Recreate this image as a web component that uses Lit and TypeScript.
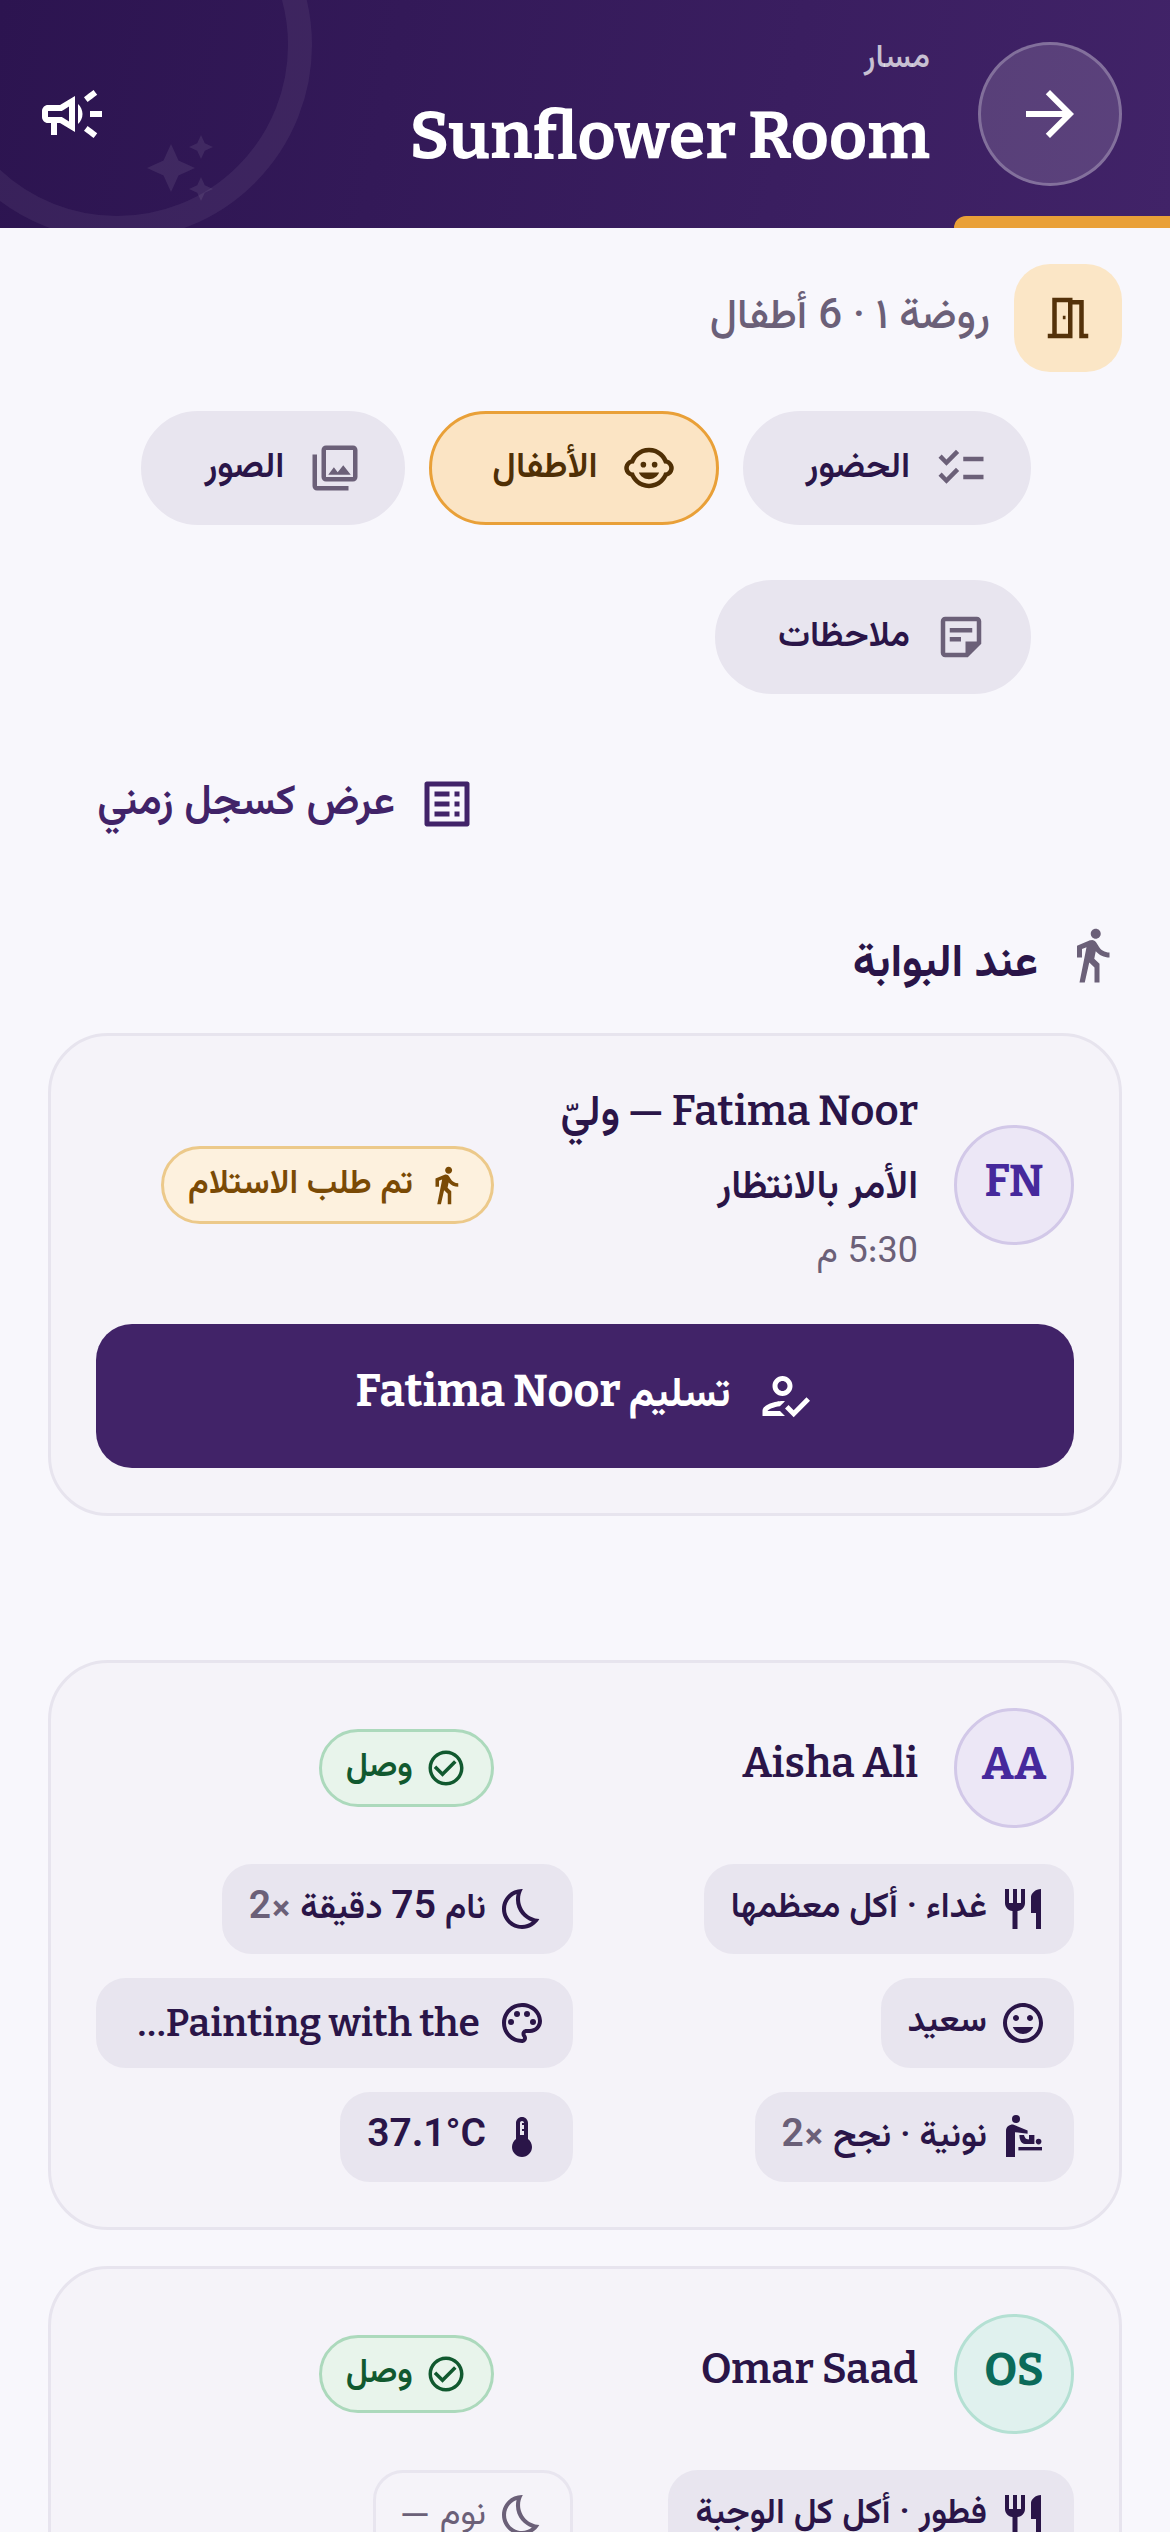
import { LitElement, html, css, svg } from 'lit'
import { customElement } from 'lit/decorators.js'

const ICONS: Record<string, unknown> = {
  arrow: svg`<path d="M12 4l-1.41 1.41L16.17 11H4v2h12.17l-5.58 5.59L12 20l8-8z"/>`,
  campaign: svg`<path d="M18 11v2h4v-2h-4zm-2 6.61c.96.71 2.21 1.65 3.2 2.39.4-.53.8-1.07 1.2-1.6-.99-.74-2.24-1.68-3.2-2.4-.4.54-.8 1.08-1.2 1.61zM20.4 5.6c-.4-.53-.8-1.07-1.2-1.6-.99.74-2.24 1.68-3.2 2.4.4.53.8 1.07 1.2 1.6.96-.72 2.21-1.65 3.2-2.4zM4 9c-1.1 0-2 .9-2 2v2c0 1.1.9 2 2 2h1v4h2v-4h1l5 3V6L8 9H4zm5.03 1.71L11 9.53v4.94l-1.97-1.18-.48-.29H4v-2h4.55l.48-.29zM15.5 12c0-1.33-.58-2.53-1.5-3.35v6.69c.92-.81 1.5-2.01 1.5-3.34z"/>`,
  sparkle: svg`<path d="M19 9l1.25-2.75L23 5l-2.75-1.25L19 1l-1.25 2.75L15 5l2.75 1.25L19 9zm-7.5.5L9 4 6.5 9.5 1 12l5.5 2.5L9 20l2.5-5.5L17 12l-5.5-2.5zM19 15l-1.25 2.75L15 19l2.75 1.25L19 23l1.25-2.75L23 19l-2.75-1.25L19 15z"/>`,
  door: svg`<path fill-rule="evenodd" d="M14 6v15H3v-2h2V3h9v1h5v15h2v2h-4V6h-3zM7 5v14h5V5H7zm2.7 6v1.6h1.2V11H9.7z"/>`,
  checklist: svg`<path d="M22 7h-9v2h9V7zm0 8h-9v2h9v-2zM5.54 11L2 7.46l1.41-1.41 2.12 2.12 4.24-4.24 1.41 1.41L5.54 11zm0 8L2 15.46l1.41-1.41 2.12 2.12 4.24-4.24 1.41 1.41L5.54 19z"/>`,
  child: svg`<circle cx="14.5" cy="10.5" r="1.25"/><circle cx="9.5" cy="10.5" r="1.25"/><path d="M22.94 11.34c-.25-1.51-1.36-2.74-2.81-3.17-.53-1.12-1.28-2.1-2.19-2.91C16.36 3.85 14.28 3 12 3s-4.36.85-5.94 2.26c-.92.81-1.67 1.8-2.19 2.91-1.45.43-2.56 1.65-2.81 3.17-.04.21-.06.43-.06.66 0 .23.02.45.06.66.25 1.51 1.36 2.74 2.81 3.17.52 1.11 1.27 2.09 2.17 2.89C7.62 20.14 9.71 21 12 21s4.38-.86 5.97-2.28c.9-.8 1.65-1.79 2.17-2.89 1.44-.43 2.55-1.65 2.8-3.17.04-.21.06-.43.06-.66 0-.23-.02-.45-.06-.66zM19 14c-.1 0-.19-.02-.29-.03-.2.67-.49 1.29-.86 1.86C16.6 17.74 14.45 19 12 19s-4.6-1.26-5.85-3.17c-.37-.57-.66-1.19-.86-1.86-.1.01-.19.03-.29.03-1.1 0-2-.9-2-2s.9-2 2-2c.1 0 .19.02.29.03.2-.67.49-1.29.86-1.86C7.4 6.26 9.55 5 12 5s4.6 1.26 5.85 3.17c.37.57.66 1.19.86 1.86.1-.01.19-.03.29-.03 1.1 0 2 .9 2 2s-.9 2-2 2zM7.5 14c.76 1.77 2.49 3 4.5 3s3.74-1.23 4.5-3h-9z"/>`,
  photos: svg`<path d="M20 4v12H8V4h12m0-2H8c-1.1 0-2 .9-2 2v12c0 1.1.9 2 2 2h12c1.1 0 2-.9 2-2V4c0-1.1-.9-2-2-2zm-8.5 9.67l1.69 2.26 2.48-3.1L19 15H9zM2 6v14c0 1.1.9 2 2 2h14v-2H4V6H2z"/>`,
  note: svg`<path d="M19 5v9h-5v5H5V5h14m0-2H5c-1.1 0-2 .9-2 2v14c0 1.1.9 2 2 2h10l6-6V5c0-1.1-.9-2-2-2zm-7 11H7v-2h5v2zm5-4H7V8h10v2z"/>`,
  list: svg`<path d="M19 5v14H5V5h14m1.1-2H3.9c-.5 0-.9.4-.9.9v16.2c0 .4.4.9.9.9h16.2c.4 0 .9-.5.9-.9V3.9c0-.5-.5-.9-.9-.9zM11 7h6v2h-6V7zm0 4h6v2h-6v-2zm0 4h6v2h-6zM7 7h2v2H7zm0 4h2v2H7zm0 4h2v2H7z"/>`,
  walk: svg`<path d="M13.5 5.5c1.1 0 2-.9 2-2s-.9-2-2-2-2 .9-2 2 .9 2 2 2zM9.8 8.9L7 23h2.1l1.8-8 2.1 2v6h2v-7.5l-2.1-2 .6-3C14.8 12 16.8 13 19 13v-2c-1.9 0-3.5-1-4.3-2.4l-1-1.6c-.4-.6-1-1-1.7-1-.3 0-.5.1-.8.1L6 8.3V13h2V9.6l1.8-.7"/>`,
  handover: svg`<path d="M11 12c2.21 0 4-1.79 4-4s-1.79-4-4-4-4 1.79-4 4 1.79 4 4 4zm0-6c1.1 0 2 .9 2 2s-.9 2-2 2-2-.9-2-2 .9-2 2-2zM5 18c.2-.63 2.57-1.68 4.96-1.94l2.04-2c-.39-.04-.68-.06-1-.06-2.67 0-8 1.34-8 4v2h9l-2-2H5zm15.6-5.5l-5.13 5.17-2.07-2.08L12 17l3.47 3.5L22 13.91z"/>`,
  check: svg`<path d="M16.59 7.58L10 14.17l-3.59-3.58L5 12l5 5 8-8zM12 2C6.48 2 2 6.48 2 12s4.48 10 10 10 10-4.48 10-10S17.52 2 12 2zm0 18c-4.42 0-8-3.58-8-8s3.58-8 8-8 8 3.58 8 8-3.58 8-8 8z"/>`,
  meal: svg`<path d="M11 9H9V2H7v7H5V2H3v7c0 2.12 1.66 3.84 3.75 3.97V22h2.5v-9.03C11.34 12.84 13 11.12 13 9V2h-2v7zm5-3v8h2.5v8H21V2c-2.76 0-5 2.24-5 4z"/>`,
  moon: svg`<path d="M9.27 4.49c-1.63 7.54 3.75 12.41 7.66 13.8C15.54 19.38 13.81 20 12.01 20c-4.41 0-8-3.59-8-8C4.01 8.55 6.2 5.6 9.27 4.49M11.99 2.01C6.4 2.01 2 6.53 2 12c0 5.52 4.48 10 10.01 10 3.71 0 6.94-2.02 8.67-5.01-7.51-.25-12.09-8.43-8.28-14.99-.14.01-.41.01-.41.01z"/>`,
  mood: svg`<path d="M11.99 2C6.47 2 2 6.48 2 12s4.47 10 9.99 10C17.52 22 22 17.52 22 12S17.52 2 11.99 2zM12 20c-4.42 0-8-3.58-8-8s3.58-8 8-8 8 3.58 8 8-3.58 8-8 8zm3.5-9c.83 0 1.5-.67 1.5-1.5S16.33 8 15.5 8 14 8.67 14 9.5s.67 1.5 1.5 1.5zm-7 0c.83 0 1.5-.67 1.5-1.5S9.33 8 8.5 8 7 8.67 7 9.5 7.67 11 8.5 11zm3.5 6.5c2.33 0 4.31-1.46 5.11-3.5H6.89c.8 2.04 2.78 3.5 5.11 3.5z"/>`,
  palette: svg`<path d="M12 22C6.49 22 2 17.51 2 12S6.49 2 12 2s10 4.04 10 9c0 3.31-2.69 6-6 6h-1.77c-.28 0-.5.22-.5.5 0 .12.05.23.13.33.41.47.64 1.06.64 1.67 0 1.38-1.12 2.5-2.5 2.5zm0-18c-4.41 0-8 3.59-8 8s3.59 8 8 8c.28 0 .5-.22.5-.5 0-.16-.08-.28-.14-.35-.41-.46-.63-1.05-.63-1.65 0-1.38 1.12-2.5 2.5-2.5H16c2.21 0 4-1.79 4-4 0-3.86-3.59-7-8-7z"/><circle cx="6.5" cy="11.5" r="1.5"/><circle cx="9.5" cy="7.5" r="1.5"/><circle cx="14.5" cy="7.5" r="1.5"/><circle cx="17.5" cy="11.5" r="1.5"/>`,
  thermo: svg`<path d="M15 13V5c0-1.66-1.34-3-3-3S9 3.34 9 5v8c-1.21.91-2 2.37-2 4 0 2.76 2.24 5 5 5s5-2.24 5-5c0-1.63-.79-3.09-2-4zm-4-8c0-.55.45-1 1-1s1 .45 1 1h-1v1h1v2h-1v1h1v2h-2V5z"/>`,
  potty: svg`<circle cx="8.5" cy="3" r="2"/><path d="M3.5 22V9c0-2 1.5-3.2 3.5-3.2l7.3 2.9v1.7L8 9.6V22z"/><path d="M10.2 11h2.3c.5 2 1.5 2.2 2.5 2.2V11h2.7v4.5H13c-1.7 0-2.8-2-2.8-4.5z"/><circle cx="19.8" cy="14.3" r="1.4"/><path d="M9.7 17h11.8v1.7H9.7z"/>`,
}

const icon = (name: string, cls = '') =>
  html`<svg class="icon ${cls}" viewBox="0 0 24 24" fill="currentColor" aria-hidden="true">${ICONS[name]}</svg>`

@customElement('app-root')
export class AppRoot extends LitElement {
  static styles = css`
    :host {
      display: block;
      height: 2532px;
      overflow: hidden;
      background: #f8f7fc;
      color: #2a1548;
      font-family: 'Vazirmatn', 'Noto Sans', sans-serif;
    }

    .icon { width: 54px; height: 54px; flex: none; display: block; }
    .mirror { transform: scaleX(-1); }
    .serif { font-family: 'Bitter', 'Vazirmatn', serif; }

    header {
      position: relative;
      height: 228px;
      box-sizing: border-box;
      padding: 0 48px 0 36px;
      display: flex;
      align-items: flex-start;
      gap: 48px;
      overflow: hidden;
      color: #fff;
      background: linear-gradient(100deg, #2c1450 0%, #412368 100%);
    }
    .ring {
      position: absolute;
      left: -78px;
      top: -150px;
      width: 390px;
      height: 390px;
      box-sizing: border-box;
      border: 24px solid rgba(255, 255, 255, 0.06);
      border-radius: 50%;
    }
    .stars {
      position: absolute;
      left: 144px;
      top: 132px;
      width: 72px;
      height: 72px;
      color: rgba(255, 255, 255, 0.08);
    }
    .accent {
      position: absolute;
      right: 0;
      bottom: 0;
      width: 216px;
      height: 12px;
      background: #e9a038;
      border-top-left-radius: 24px;
    }
    .back {
      width: 144px;
      height: 144px;
      margin-top: 42px;
      flex: none;
      box-sizing: border-box;
      border-radius: 50%;
      border: 3px solid rgba(255, 255, 255, 0.25);
      background: rgba(255, 255, 255, 0.14);
      display: flex;
      align-items: center;
      justify-content: center;
      position: relative;
    }
    .back .icon { width: 72px; height: 72px; }
    .head-text { flex: 1; padding-top: 38px; position: relative; }
    .eyebrow { font-size: 33px; line-height: 42px; font-weight: 500; color: rgba(255, 255, 255, 0.72); }
    h1 { margin: 11px 0 0; font-size: 66px; line-height: 90px; font-weight: 700; }
    .promo { margin-top: 78px; width: 72px; height: 72px; position: relative; }
    .promo .icon { width: 72px; height: 72px; }

    .room {
      display: flex;
      align-items: center;
      gap: 24px;
      padding: 36px 48px 0;
    }
    .room-icon {
      width: 108px;
      height: 108px;
      border-radius: 36px;
      background: #fbe6c6;
      color: #54320a;
      display: flex;
      align-items: center;
      justify-content: center;
    }
    .room-text { font-size: 42px; line-height: 60px; font-weight: 500; color: #6b6078; }

    .tabs {
      display: flex;
      flex-wrap: wrap;
      gap: 55px 24px;
      padding: 39px 139px 0 48px;
    }
    .tab {
      height: 114px;
      box-sizing: border-box;
      padding: 0 40px 0 60px;
      border-radius: 57px;
      border: 3px solid #e8e5ef;
      background: #e8e5ef;
      display: flex;
      align-items: center;
      gap: 24px;
      font-size: 36px;
      line-height: 54px;
      font-weight: 600;
      color: #2a1548;
    }
    .tab .icon { color: #6b6078; }
    .tab.on { background: #fbe4c4; border-color: #e9a038; color: #4f2f05; }
    .tab.on .icon { color: #4f2f05; }

    .timeline {
      display: flex;
      align-items: center;
      gap: 22px;
      height: 60px;
      margin: 80px 0 0;
      padding: 0 693px 0 96px;
      font-size: 42px;
      line-height: 60px;
      font-weight: 600;
      color: #412368;
      white-space: nowrap;
    }
    .timeline .icon { width: 60px; height: 60px; }

    .section {
      display: flex;
      align-items: center;
      gap: 24px;
      height: 60px;
      margin: 91px 0 0;
      padding: 0 48px;
      font-size: 45px;
      line-height: 60px;
      font-weight: 700;
    }
    .section .icon { width: 60px; height: 60px; color: #6b6078; }
    .section span { padding-top: 20px; }

    .card {
      margin: 0 48px;
      padding: 45px;
      border: 3px solid #e7e4ee;
      border-radius: 60px;
      background: #f5f3f9;
    }
    .card-head { display: flex; align-items: center; gap: 36px; }
    .avatar {
      width: 120px;
      height: 120px;
      flex: none;
      box-sizing: border-box;
      padding-bottom: 8px;
      border-radius: 50%;
      border: 3px solid #d2c8e8;
      background: #ece7f6;
      color: #46299c;
      display: flex;
      align-items: center;
      justify-content: center;
      font-size: 45px;
      font-weight: 700;
    }
    .avatar.green { background: #e0f1ee; border-color: #b4e0d3; color: #0b6b5a; }
    .who { flex: 1; min-width: 0; }
    .who.solo { padding-bottom: 10px; }
    .name { font-size: 42px; line-height: 60px; font-weight: 600; white-space: nowrap; }
    .sub { margin-top: 15px; font-size: 39px; line-height: 66px; font-weight: 600; }
    .time { margin-top: 6px; padding-bottom: 9px; font-size: 36px; line-height: 51px; font-weight: 400; color: #6b6078; }
    .status { width: 398px; flex: none; display: flex; }
    .pill {
      height: 78px;
      box-sizing: border-box;
      padding: 0 24px;
      border-radius: 39px;
      border: 3px solid;
      display: flex;
      align-items: center;
      gap: 12px;
      font-size: 34px;
      line-height: 48px;
      font-weight: 600;
      white-space: nowrap;
    }
    .pill .icon { width: 42px; height: 42px; }
    .pill.wait { background: #fdf1de; border-color: #ecc98a; color: #7a4a05; }
    .pill.in { background: #e8f4eb; border-color: #acd9bc; color: #11592f; }

    .handover {
      height: 144px;
      margin-top: 36px;
      border-radius: 36px;
      background: #412368;
      color: #fff;
      display: flex;
      align-items: center;
      justify-content: center;
      gap: 24px;
      font-size: 45px;
      line-height: 60px;
      font-weight: 700;
    }
    .handover .icon { width: 60px; height: 60px; }
    .handover span { padding-bottom: 8px; }
    .handover i { font-size: 41px; font-style: normal; }

    .chips {
      display: grid;
      grid-template-columns: 1fr 1fr;
      gap: 24px;
      margin-top: 36px;
      justify-items: start;
    }
    .chip {
      max-width: 100%;
      min-width: 0;
      height: 90px;
      box-sizing: border-box;
      padding: 0 24px;
      border: 3px solid #e8e5ef;
      border-radius: 30px;
      background: #e8e5ef;
      display: flex;
      align-items: center;
      gap: 12px;
      font-size: 35px;
      line-height: 54px;
      font-weight: 600;
    }
    .chip.wide { width: 100%; }
    .chip .icon { width: 48px; height: 48px; }
    .chip span { white-space: nowrap; }
    .chip .num { font-size: 39px; font-weight: inherit; }
    .chip .serif { margin-inline-start: 6px; }
    .chip small { font-size: 39px; color: #6b6078; }
    .chip.empty { background: transparent; color: #6b6078; font-weight: 400; }

    .first { margin-top: 48px; }
    .second { margin-top: 144px; }
    .third { margin-top: 36px; }
  `

  render() {
    return html`
      <div dir="rtl">
        <header>
          <div class="ring"></div>
          <svg class="icon stars" viewBox="0 0 24 24" fill="currentColor">${ICONS.sparkle}</svg>
          <div class="back">${icon('arrow')}</div>
          <div class="head-text">
            <div class="eyebrow">مسار</div>
            <h1 class="serif">Sunflower Room</h1>
          </div>
          <div class="promo">${icon('campaign')}</div>
          <div class="accent"></div>
        </header>

        <div class="room">
          <div class="room-icon">${icon('door')}</div>
          <div class="room-text">روضة ١ · 6 أطفال</div>
        </div>

        <div class="tabs">
          <div class="tab">${icon('checklist')}الحضور</div>
          <div class="tab on">${icon('child')}الأطفال</div>
          <div class="tab">${icon('photos')}الصور</div>
          <div class="tab">${icon('note')}ملاحظات</div>
        </div>

        <div class="timeline">${icon('list', 'mirror')}عرض كسجل زمني</div>

        <div class="section">${icon('walk')}<span>عند البوابة</span></div>

        <div class="card first">
          <div class="card-head">
            <div class="avatar serif">FN</div>
            <div class="who">
              <div class="name serif">Fatima Noor — وليّ</div>
              <div class="sub">الأمر بالانتظار</div>
              <div class="time">5:30 م</div>
            </div>
            <div class="status"><div class="pill wait">${icon('walk')}تم طلب الاستلام</div></div>
          </div>
          <div class="handover serif">${icon('handover')}<span><i>تسليم</i> Fatima Noor</span></div>
        </div>

        <div class="card second">
          <div class="card-head">
            <div class="avatar serif">AA</div>
            <div class="who solo"><div class="name serif">Aisha Ali</div></div>
            <div class="status"><div class="pill in">${icon('check')}وصل</div></div>
          </div>
          <div class="chips">
            <div class="chip">${icon('meal')}<span>غداء · أكل معظمها</span></div>
            <div class="chip">${icon('moon')}<span>نام <b class="num">75</b> دقيقة <small>×2</small></span></div>
            <div class="chip">${icon('mood')}<span>سعيد</span></div>
            <div class="chip wide">${icon('palette')}<span class="serif num">Painting with the…</span></div>
            <div class="chip">${icon('potty')}<span>نونية · نجح <small>×2</small></span></div>
            <div class="chip">${icon('thermo')}<span class="num">37.1°C</span></div>
          </div>
        </div>

        <div class="card third">
          <div class="card-head">
            <div class="avatar green serif">OS</div>
            <div class="who solo"><div class="name serif">Omar Saad</div></div>
            <div class="status"><div class="pill in">${icon('check')}وصل</div></div>
          </div>
          <div class="chips">
            <div class="chip">${icon('meal')}<span>فطور · أكل كل الوجبة</span></div>
            <div class="chip empty">${icon('moon')}<span>نوم <b class="num">—</b></span></div>
          </div>
        </div>
      </div>
    `
  }
}

declare global {
  interface HTMLElementTagNameMap {
    'app-root': AppRoot
  }
}
